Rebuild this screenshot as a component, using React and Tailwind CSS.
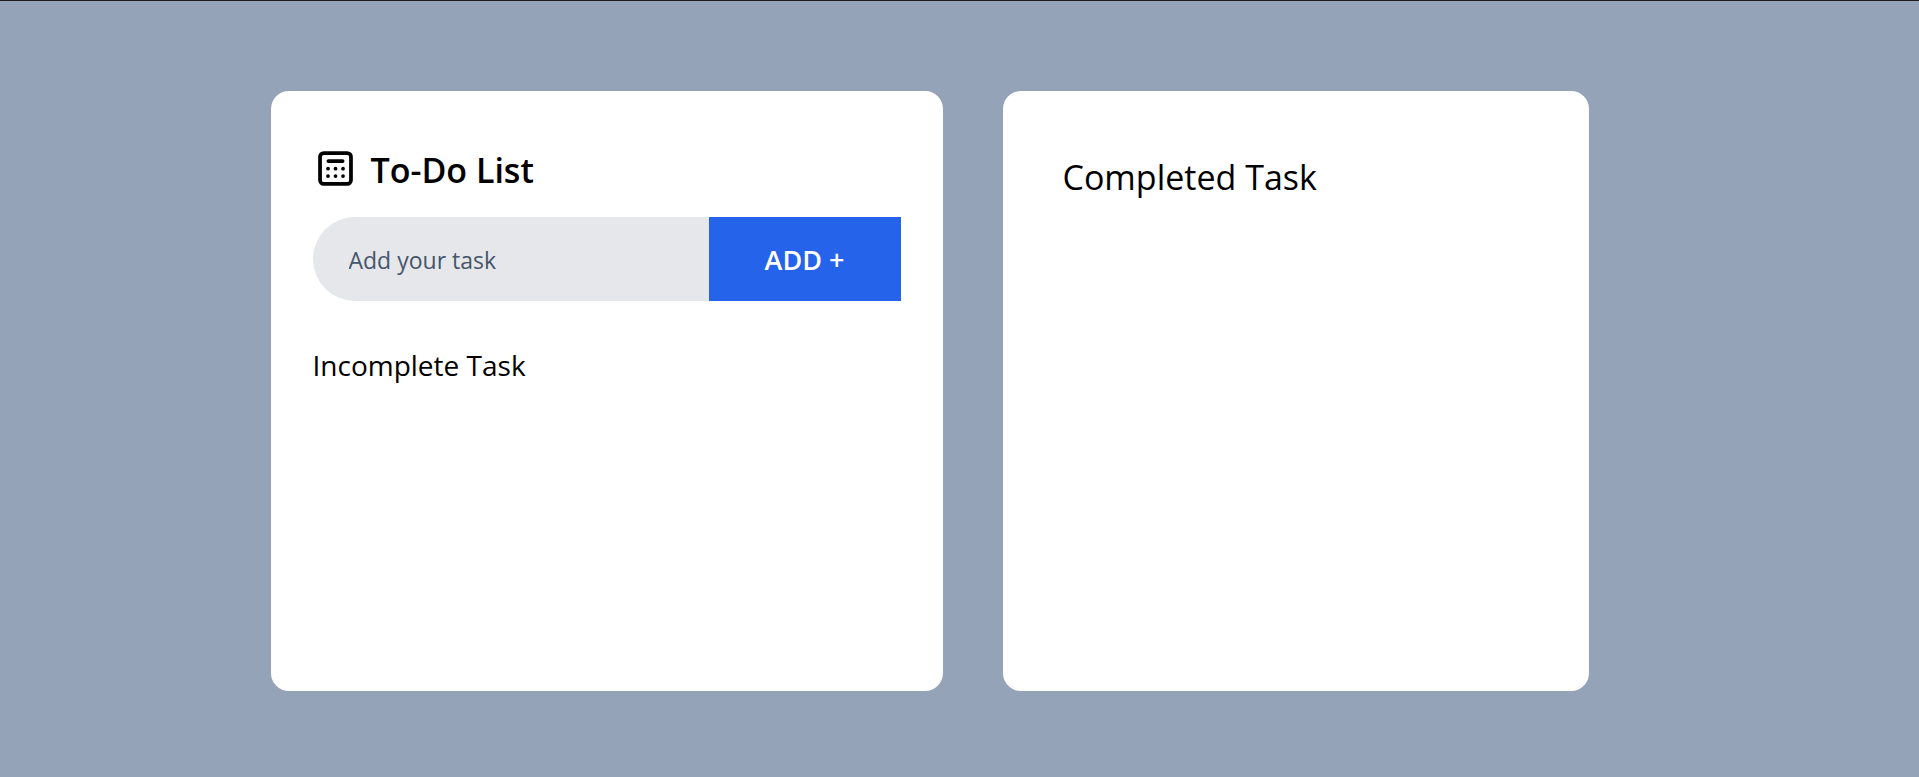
import { useState } from "react";

function CalculatorIcon() {
  return (
    <svg viewBox="0 0 24 24" className="size-[45px] shrink-0" fill="none" stroke="currentColor" strokeWidth="2" strokeLinecap="round" aria-hidden="true">
      <rect x="3.75" y="3.75" width="16.5" height="16.5" rx="2" />
      <path d="M8.2 8h7.6" />
      <g fill="currentColor" stroke="none">
        <circle cx="8" cy="12.1" r="1" />
        <circle cx="12" cy="12.1" r="1" />
        <circle cx="16" cy="12.1" r="1" />
        <circle cx="8" cy="16" r="1" />
        <circle cx="12" cy="16" r="1" />
        <circle cx="16" cy="16" r="1" />
      </g>
    </svg>
  );
}

export default function App() {
  const [task, setTask] = useState("");
  const [tasks, setTasks] = useState([]);
  const [completed, setCompleted] = useState([]);

  const addTask = (event) => {
    event.preventDefault();
    if (!task.trim()) return;
    setTasks([...tasks, task.trim()]);
    setTask("");
  };

  const completeTask = (index) => {
    setCompleted([...completed, tasks[index]]);
    setTasks(tasks.filter((_, i) => i !== index));
  };

  return (
    <main className="flex min-h-screen items-start justify-center gap-[60px] border-t border-[#1f1a1c] bg-[#94a3b8] pt-[90px] pr-[60px] font-['Open_Sans','Noto_Sans',sans-serif] text-black">
      <section className="min-h-[600px] w-full max-w-[672px] rounded-[18px] bg-white px-[42px] pt-[55px] pb-10">
        <div className="flex items-start gap-[13px]">
          <CalculatorIcon />
          <h1 className="pt-0.5 text-[34px] leading-[45px] font-semibold">To-Do List</h1>
        </div>
        <form onSubmit={addTask} className="mt-6 flex h-[84px]">
          <input
            type="text"
            aria-label="Add your task"
            placeholder="Add your task"
            value={task}
            onChange={(event) => setTask(event.target.value)}
            className="min-w-0 flex-1 rounded-l-full bg-gray-200 pt-0.5 pr-3 pl-9 text-[23px] outline-none placeholder:text-slate-600"
          />
          <button type="submit" className="w-[192px] bg-[#2563eb] pt-0.5 text-[27px] font-semibold text-white">
            ADD +
          </button>
        </form>
        <h2 className="mt-11 text-[28px] leading-[40px]">Incomplete Task</h2>
        <ul className="mt-4 text-xl">
          {tasks.map((item, index) => (
            <li key={index}>
              <label className="flex items-center gap-3 py-2">
                <input type="checkbox" checked={false} onChange={() => completeTask(index)} />
                {item}
              </label>
            </li>
          ))}
        </ul>
      </section>
      <section className="min-h-[600px] w-full max-w-[586px] rounded-[18px] bg-white p-[60px]">
        <h2 className="pt-1 text-[34px] leading-[45px]">Completed Task</h2>
        <ul className="mt-4 text-xl">
          {completed.map((item, index) => (
            <li key={index} className="py-2">{item}</li>
          ))}
        </ul>
      </section>
    </main>
  );
}
